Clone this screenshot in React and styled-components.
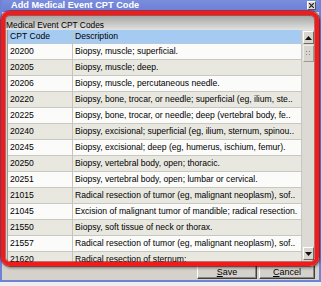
import React from "react";
import styled, { createGlobalStyle } from "styled-components";

const Global = createGlobalStyle`
  html, body { margin: 0; padding: 0; background: #eeeeee; }
  body { font-family: "Liberation Sans", Arial, sans-serif; font-size: 9px; color: #000; }
  * { box-sizing: border-box; }
`;

const Window = styled.div`
  position: relative;
  width: 321px;
  height: 282px;
  display: flex;
  flex-direction: column;
  background: #6f82d6;
  padding: 0 2px 2px 2px;
`;

const TitleBar = styled.div`
  height: 12px;
  display: flex;
  align-items: center;
  justify-content: space-between;
  padding: 0 3px 0 9px;
  background: linear-gradient(#7a8ddd, #6a7ed4);
`;

const Title = styled.span`
  color: #fff;
  font-weight: bold;
  font-size: 9.2px;
  line-height: 12px;
  margin-top: -2px;
`;

const CloseBtn = styled.span`
  width: 9px;
  height: 9px;
  margin-top: -1px;
  background: #d8d8d8;
  border: 1px solid #fff;
  border-right-color: #555;
  border-bottom-color: #555;
  display: flex;
  align-items: center;
  justify-content: center;
  svg { display: block; }
`;

const Client = styled.div`
  flex: 1;
  display: flex;
  flex-direction: column;
  background: #d5d2cc;
  padding: 3px 4px 1px 5px;
`;

const GroupLabel = styled.div`
  height: 15px;
  line-height: 13px;
  padding: 4px 0 0 2px;
  font-size: 8.4px;
  background: linear-gradient(#a2a2a2, #e2e2e0);
  margin-left: -3px;
  margin-right: -4px;
`;

const TableWrap = styled.div`
  height: 232px;
  display: flex;
  background: #fff;
`;

const Grid = styled.div`
  flex: 1;
  overflow: hidden;
  border-left: 1px solid #9a9a9a;
  display: flex;
  flex-direction: column;
`;

const Row = styled.div`
  display: grid;
  grid-template-columns: 65px 1fr;
  flex: 0 0 auto;
  height: ${(p) => (p.$header ? 14 : 16)}px;
  background: ${(p) => (p.$header ? "#a5cbf2" : p.$alt ? "#e8e8e0" : "#fbfbfa")};
  border-bottom: 1px solid ${(p) => (p.$header ? "#b8c8d8" : "#c8c8c0")};
`;

const Cell = styled.div`
  padding-left: 2px;
  line-height: ${(p) => (p.$header ? 13 : 15)}px;
  white-space: nowrap;
  overflow: hidden;
  border-right: ${(p) => (p.$first ? "1px solid #c4c4bc" : "none")};
  font-size: 8.6px;
`;

const ScrollBar = styled.div`
  width: 14px;
  background: #dcdad4;
  border-left: 1px solid #c8c6c0;
  display: flex;
  flex-direction: column;
  padding: 1px 1px 2px 1px;
`;

const ScrollBtn = styled.div`
  height: 13px;
  background: #d8d5cf;
  border: 1px solid #fff;
  border-right-color: #6a6a6a;
  border-bottom-color: #6a6a6a;
  display: flex;
  align-items: center;
  justify-content: center;
`;

const Thumb = styled.div`
  height: 17px;
  margin-top: 1px;
  background: #d8d5cf;
  border: 1px solid #ecebe8;
  border-right-color: #9a9a9a;
  border-bottom-color: #9a9a9a;
  display: flex;
  align-items: center;
  justify-content: center;
`;

const Track = styled.div`
  flex: 1;
`;

const Footer = styled.div`
  display: flex;
  justify-content: flex-end;
  gap: 2px;
  margin-top: 3px;
  height: 14px;
`;

const Button = styled.div`
  width: ${(p) => p.$w}px;
  height: 14px;
  background: #d5d2cc;
  border: 1px solid #fff;
  border-right-color: #404040;
  border-bottom-color: #404040;
  box-shadow: inset -1px -1px 0 #888;
  display: flex;
  align-items: center;
  justify-content: center;
  font-size: 9px;
  u { text-decoration: underline; }
`;

const Highlight = styled.div`
  position: absolute;
  left: 1px;
  top: 11px;
  width: 318px;
  height: 255px;
  border: 4px solid #f01c1c;
  border-radius: 9px;
  box-shadow: 0 0 0 1px rgba(150, 0, 0, 0.55), 1px 2px 3px rgba(0, 0, 0, 0.45),
    inset 0 0 0 1px rgba(150, 0, 0, 0.5);
  pointer-events: none;
`;

const rows = [
  ["20200", "Biopsy, muscle; superficial."],
  ["20205", "Biopsy, muscle; deep."],
  ["20206", "Biopsy, muscle, percutaneous needle."],
  ["20220", "Biopsy, bone, trocar, or needle; superficial (eg, ilium, ste.."],
  ["20225", "Biopsy, bone, trocar, or needle; deep (vertebral body, fe.."],
  ["20240", "Biopsy, excisional; superficial (eg, ilium, sternum, spinou.."],
  ["20245", "Biopsy, excisional; deep (eg, humerus, ischium, femur)."],
  ["20250", "Biopsy, vertebral body, open; thoracic."],
  ["20251", "Biopsy, vertebral body, open; lumbar or cervical."],
  ["21015", "Radical resection of tumor (eg, malignant neoplasm), sof.."],
  ["21045", "Excision of malignant tumor of mandible; radical resection."],
  ["21550", "Biopsy, soft tissue of neck or thorax."],
  ["21557", "Radical resection of tumor (eg, malignant neoplasm), sof.."],
  ["21620", "Radical resection of sternum;"],
];

export default function App() {
  return (
    <>
      <Global />
      <Window>
        <TitleBar>
          <Title>Add Medical Event CPT Code</Title>
          <CloseBtn>
            <svg width="5" height="5" viewBox="0 0 5 5">
              <path d="M0 0L5 5M5 0L0 5" stroke="#222" strokeWidth="1.2" />
            </svg>
          </CloseBtn>
        </TitleBar>
        <Client>
          <GroupLabel>Medical Event CPT Codes</GroupLabel>
          <TableWrap>
            <Grid>
              <Row $header>
                <Cell $header $first>CPT Code</Cell>
                <Cell $header>Description</Cell>
              </Row>
              {rows.map(([code, desc], i) => (
                <Row key={code} $alt={i % 2 === 1}>
                  <Cell $first>{code}</Cell>
                  <Cell>{desc}</Cell>
                </Row>
              ))}
            </Grid>
            <ScrollBar>
              <ScrollBtn>
                <svg width="7" height="4" viewBox="0 0 7 4">
                  <path d="M3.5 0L7 4H0Z" fill="#111" />
                </svg>
              </ScrollBtn>
              <Thumb>
                <svg width="5" height="5" viewBox="0 0 5 5">
                  <rect x="0" y="0" width="1" height="1" fill="#888" />
                  <rect x="3" y="0" width="1" height="1" fill="#888" />
                  <rect x="0" y="3" width="1" height="1" fill="#888" />
                  <rect x="3" y="3" width="1" height="1" fill="#888" />
                </svg>
              </Thumb>
              <Track />
              <ScrollBtn>
                <svg width="7" height="4" viewBox="0 0 7 4">
                  <path d="M0 0H7L3.5 4Z" fill="#111" />
                </svg>
              </ScrollBtn>
            </ScrollBar>
          </TableWrap>
          <Footer>
            <Button $w={60}>
              <span><u>S</u>ave</span>
            </Button>
            <Button $w={56}>
              <span><u>C</u>ancel</span>
            </Button>
          </Footer>
        </Client>
        <Highlight />
      </Window>
    </>
  );
}
